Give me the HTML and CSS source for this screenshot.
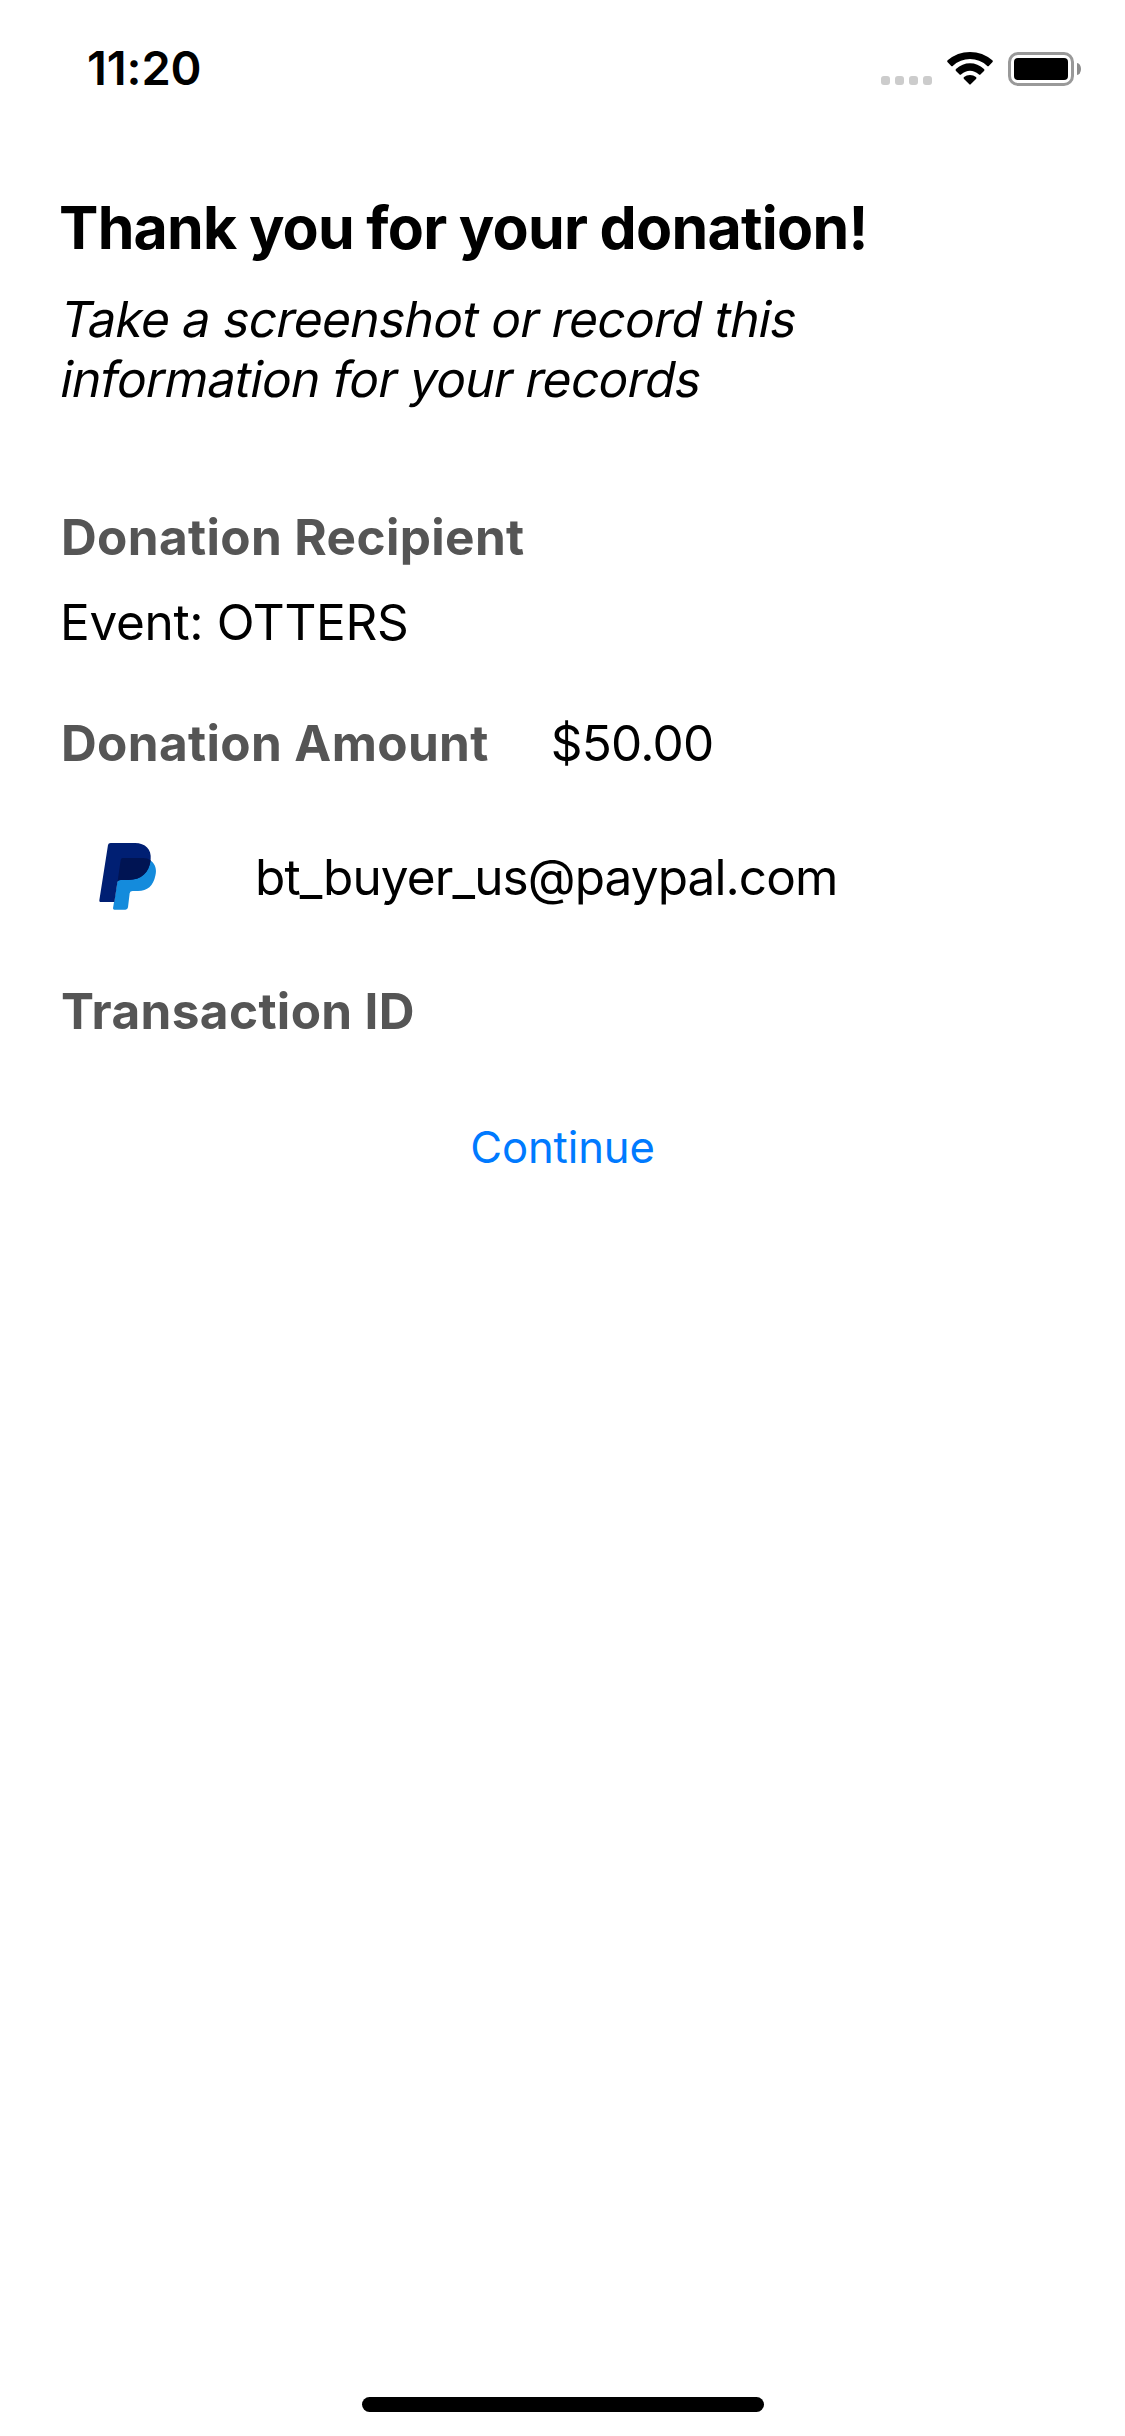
FILE: index.html
```
<!DOCTYPE html>
<html lang="en">
<head>
  <meta charset="utf-8">
  <title>Donation receipt</title>
  <link rel="stylesheet" href="styles.css">
</head>
<body>
  <div class="screen">
    <header class="status-bar">
      <time class="clock">11:20</time>
      <div class="status-icons">
        <div class="signal"><i class="dot"></i><i class="dot"></i><i class="dot"></i><i class="dot"></i></div>
        <svg class="wifi" viewBox="0 0 138 99" aria-hidden="true">
          <path d="M2 31 Q-1 28 2 25 Q31 0 69 0 Q107 0 136 25 Q139 28 136 31 L126 41 Q123 44 120 41 Q98 21 69 21 Q40 21 18 41 Q15 44 12 41 Z"/>
          <path d="M27 57 Q24 54 27 51 Q46 34 69 34 Q92 34 111 51 Q114 54 111 57 L101 67 Q98 70 95 67 Q83 56 69 56 Q55 56 43 67 Q40 70 37 67 Z"/>
          <path d="M51 81 Q48 78 51 75 Q59 69 69 69 Q79 69 87 75 Q90 78 87 81 L71 97 Q69 99 67 97 Z"/>
        </svg>
        <div class="battery"><div class="battery-case"><div class="battery-level"></div></div><div class="battery-cap"></div></div>
      </div>
    </header>

    <main class="receipt">
      <h1 class="title">Thank you for your donation!</h1>
      <p class="hint">
        <span class="hint-line">Take a screenshot or record this</span>
        <span class="hint-line">information for your records</span>
      </p>

      <h2 class="label recipient-label">Donation Recipient</h2>
      <p class="value recipient">Event: OTTERS</p>

      <div class="amount-row">
        <h2 class="label">Donation Amount</h2>
        <span class="value amount">$50.00</span>
      </div>

      <div class="account-row">
        <svg class="paypal" viewBox="42 39 171 201" role="img" aria-label="PayPal">
          <path fill="#148bdc" d="M190 88 C208 96 217 114 211 137 C205 167 187 183 159 183 H143 Q135 183 134 190 L129 232 Q128 239 121 239 H88 Q84 239 84 235 L98 150 Z"/>
          <path fill="#001f73" d="M77 39 H150 C181 39 200 58 197 88 C193 128 169 150 130 150 H107 Q98 150 97 158 L88 216 H46 Q42 216 43 211 L69 45 Q70 39 77 39 Z"/>
          <path fill="#001453" d="M113 84 H174 Q187 84 197 91 C192 129 169 150 130 150 H107 Q102 150 98 153 L107 90 Q108 84 113 84 Z"/>
        </svg>
        <span class="value account">bt_buyer_us@paypal.com</span>
      </div>

      <h2 class="label transaction">Transaction ID</h2>
      <button class="continue" type="button">Continue</button>
    </main>

    <div class="home-indicator"></div>
  </div>
</body>
</html>
```
FILE: styles.css
```
* { box-sizing: border-box; }

body, h1, h2, p { margin: 0; }

body {
  background: #fff;
  color: #000;
  font-family: Inter, "Liberation Sans", sans-serif;
}

.screen {
  display: flex;
  flex-direction: column;
  width: 1125px;
  height: 2436px;
}

.status-bar {
  display: flex;
  justify-content: space-between;
  align-items: flex-start;
  height: 132px;
  padding: 38px 44px 0 87px;
}

.clock {
  font-size: 47px;
  font-weight: 600;
  line-height: 60px;
  letter-spacing: -0.1px;
}

.status-icons {
  display: flex;
  align-items: flex-start;
  padding-top: 14px;
}

.signal {
  display: flex;
  gap: 5px;
  margin: 24px 15px 0 0;
}

.dot {
  width: 9px;
  height: 9px;
  border-radius: 3px;
  background: #ccc;
}

.wifi {
  width: 46px;
  height: 33px;
  margin-right: 15px;
}

.battery {
  display: flex;
  align-items: center;
  gap: 3px;
}

.battery-case {
  width: 66px;
  height: 34px;
  padding: 3px;
  border: 3px solid #999;
  border-radius: 10px;
}

.battery-level {
  height: 22px;
  border-radius: 4px;
  background: #000;
}

.battery-cap {
  width: 4px;
  height: 12px;
  border-radius: 0 4px 4px 0 / 0 6px 6px 0;
  background: #8c8c8c;
}

.receipt {
  display: flex;
  flex: 1;
  flex-direction: column;
  padding: 60px 60px 0;
}

.title {
  margin-left: -1px;
  font-size: 59px;
  font-weight: 700;
  line-height: 72px;
  letter-spacing: -0.75px;
  word-spacing: -0.9px;
}

.hint {
  margin: 25px 0 0 -2px;
  font-size: 49.5px;
  line-height: 60px;
  letter-spacing: -0.57px;
}

.hint-line {
  display: block;
  transform: skewX(-11deg);
  transform-origin: 0 48px;
}

.label {
  padding-left: 1px;
  color: #555;
  font-size: 49.5px;
  font-weight: 700;
  line-height: 60px;
  letter-spacing: 0.36px;
}

.value {
  font-size: 49.5px;
  line-height: 60px;
}

.recipient-label { margin-top: 98px; }

.recipient {
  margin-top: 25px;
  letter-spacing: -0.33px;
}

.amount-row {
  display: flex;
  gap: 62px;
  margin-top: 61px;
}

.amount { letter-spacing: -0.75px; }

.account-row {
  display: flex;
  align-items: center;
  gap: 99px;
  height: 67px;
  margin-top: 70px;
  padding-left: 39px;
}

.paypal {
  width: 57px;
  height: 67px;
}

.account { letter-spacing: -0.9px; }

.transaction { margin-top: 71px; }

.continue {
  align-self: center;
  margin-top: 80px;
  padding: 0;
  border: 0;
  background: none;
  color: #007aff;
  font: 400 43.6px/54px Inter, "Liberation Sans", sans-serif;
  letter-spacing: -0.1px;
}

.home-indicator {
  align-self: center;
  width: 402px;
  height: 15px;
  margin-bottom: 24px;
  border-radius: 8px;
  background: #000;
}
```
